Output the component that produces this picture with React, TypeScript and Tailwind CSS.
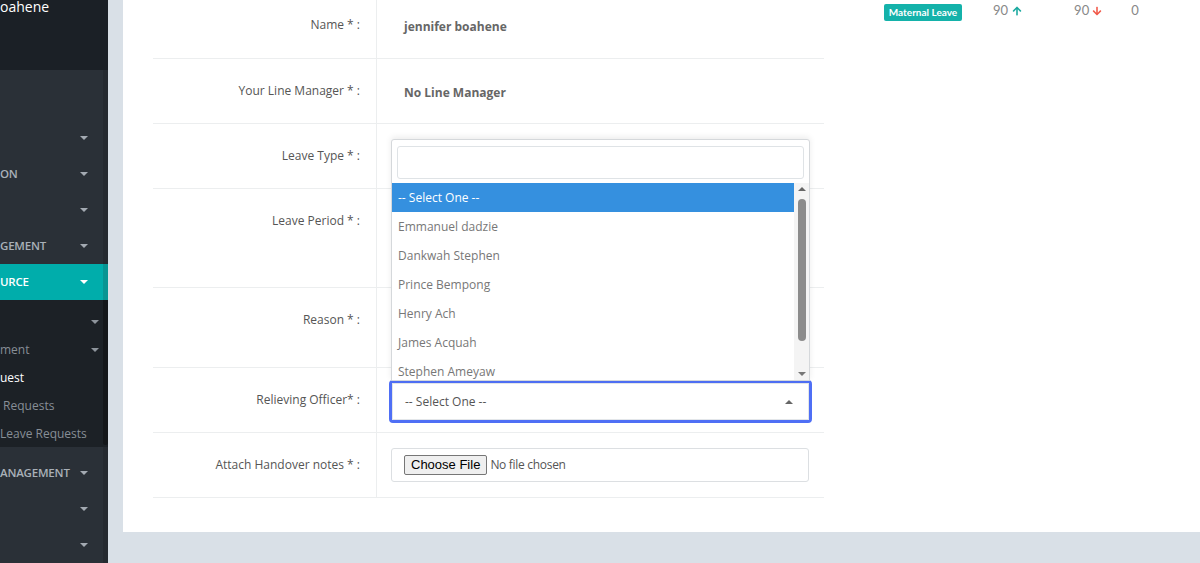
import { FaArrowUp, FaArrowDown } from 'react-icons/fa';

// small triangle used for the sidebar menu carets
const Caret = ({ color = 'border-t-[#a3aab2]', up = false }: { color?: string; up?: boolean }) => (
    <span
        className={`block w-0 h-0 border-l-[4px] border-r-[4px] border-l-transparent border-r-transparent ${up ? 'border-b-[4px] border-b-[#666]' : `border-t-[4px] ${color}`}`}
    />
);

const MenuRow = ({ text, caret, active }: { text?: string; caret?: boolean; active?: boolean }) => (
    <div className={`h-[36px] flex items-center justify-between pr-[15px] text-[11.5px] font-semibold tracking-[-0.2px] ${active ? 'text-white' : 'text-[#a9b0b8]'}`}>
        <span>{text}</span>
        {caret && <Caret color={active ? 'border-t-white' : 'border-t-[#a3aab2]'} />}
    </div>
);

const SubRow = ({ text, caret, active }: { text?: string; caret?: boolean; active?: boolean }) => (
    <div className={`h-[28px] flex items-center justify-between pr-[4px] text-[12px] whitespace-pre ${active ? 'text-white' : 'text-[#878e96]'}`}>
        <span>{text}</span>
        {caret && <Caret color="border-t-[#8d949b]" />}
    </div>
);

const Sidebar = () => (
    <aside className="w-[108px] shrink-0 h-[563px] flex flex-col bg-[#2a3037] overflow-hidden">
        <div className="h-[70px] bg-[#1b2026] shrink-0">
            <div className="-mt-[3px] text-[14px] leading-[20px] text-white">oahene</div>
        </div>
        <div className="border-r-[5px] border-[#252a30] pt-[50px]">
            <MenuRow caret />
            <MenuRow text="ON" caret />
            <MenuRow caret />
            <MenuRow text="GEMENT" caret />
        </div>
        <div className="bg-[#00adab] border-r-[5px] border-[#089593]">
            <MenuRow text="URCE" caret active />
        </div>
        <div className="flex bg-[#1c2126]">
            <div className="flex-1 pt-[8px] h-[147px]">
                <SubRow caret />
                <SubRow text="ment" caret />
                <SubRow text="uest" active />
                <SubRow text=" Requests" />
                <SubRow text="Leave Requests" />
            </div>
            <div className="w-[5px] h-[145px] bg-[#14171a] rounded-b-[3px]" />
        </div>
        <div className="border-r-[5px] border-[#252a30] pt-[8px] flex-1">
            <MenuRow text="ANAGEMENT" caret />
            <MenuRow caret />
            <MenuRow caret />
        </div>
    </aside>
);

const Label = ({ children }: { children: React.ReactNode }) => (
    <div className="w-[224px] shrink-0 border-r border-[#eceeef] text-right pr-[16px] pt-[22px] text-[12px] leading-[20px] text-[#555]">
        {children}
    </div>
);

const options = [
    '-- Select One --',
    'Emmanuel dadzie',
    'Dankwah Stephen',
    'Prince Bempong',
    'Henry Ach',
    'James Acquah',
    'Stephen Ameyaw',
];

// the opened select2 dropdown that floats over the form rows
const Dropdown = () => (
    <div className="absolute left-[238px] top-[139px] w-[419px] h-[242px] bg-white border border-[#d5d8db] rounded-t-[3px] shadow-[0_-2px_6px_rgba(0,0,0,0.08)] flex flex-col">
        <div className="px-[5px] pt-[6px] pb-[4px]">
            <div className="h-[33px] border border-[#dfe3e6] rounded-[3px]" />
        </div>
        <div className="flex flex-1 overflow-hidden">
            <div className="flex-1 overflow-hidden">
                {options.map((o, i) => (
                    <div
                        key={o}
                        className={`h-[29px] flex items-center pl-[6px] text-[12px] ${i === 0 ? 'bg-[#3590df] text-white' : 'text-[#777]'}`}
                    >
                        {o}
                    </div>
                ))}
            </div>
            <div className="w-[15px] bg-[#f4f4f4] flex flex-col items-center">
                <div className="pt-[4px] pb-[8px]"><Caret up /></div>
                <div className="w-[8px] h-[142px] bg-[#8c8c8c] rounded-[4px]" />
                <div className="mt-auto pb-[4px]"><Caret color="border-t-[#777]" /></div>
            </div>
        </div>
    </div>
);

export default function App() {
    return (
        <div className="w-[1200px] h-[563px] flex bg-[#d9e0e7] overflow-hidden" style={{ fontFamily: '"Open Sans", "Liberation Sans", sans-serif' }}>
            <Sidebar />
            <main className="flex-1 pl-[15px]">
                <div className="bg-white h-[532px] pl-[30px] flex">
                    <div className="relative w-[671px] shrink-0">
                        <div className="flex h-[59px] border-b border-[#eceeef]">
                            <div className="w-[224px] shrink-0 border-r border-[#eceeef] text-right pr-[16px] pt-[15px] text-[12px] leading-[20px] text-[#555]">Name * :</div>
                            <div className="pl-[27px] pt-[17px] text-[12px] leading-[20px] font-bold text-[#666]">jennifer boahene</div>
                        </div>
                        <div className="flex h-[65px] border-b border-[#eceeef]">
                            <Label>Your Line Manager * :</Label>
                            <div className="pl-[27px] pt-[24px] text-[12px] leading-[20px] font-bold text-[#666]">No Line Manager</div>
                        </div>
                        <div className="flex h-[65px] border-b border-[#eceeef]">
                            <Label>Leave Type * :</Label>
                        </div>
                        <div className="flex h-[99px] border-b border-[#eceeef]">
                            <Label>Leave Period * :</Label>
                        </div>
                        <div className="flex h-[80px] border-b border-[#eceeef]">
                            <Label>Reason * :</Label>
                        </div>
                        <div className="flex h-[65px] border-b border-[#eceeef]">
                            <Label>Relieving Officer* :</Label>
                            <div className="flex-1 pl-[12px] pr-[12px] pt-[12px]">
                                <div className="h-[43px] border-[3px] border-[#4f6ff5] rounded-[4px]">
                                    <div className="h-full border border-[#e3e6e9] flex items-center justify-between pl-[12px] pr-[15px] text-[12px] text-[#555]">
                                        <span>-- Select One --</span>
                                        <Caret up />
                                    </div>
                                </div>
                            </div>
                        </div>
                        <div className="flex h-[65px] border-b border-[#eceeef]">
                            <Label>Attach Handover notes * :</Label>
                            <div className="flex-1 pl-[14px] pr-[15px] pt-[15px]">
                                <div className="h-[34px] border border-[#dcdfe2] rounded-[3px] flex items-center pl-[12px] gap-[3px]">
                                    <span className="h-[20px] px-[6px] flex items-center bg-[#efefef] border border-[#767676] rounded-[2px] text-[13px] text-black" style={{ fontFamily: '"Liberation Sans", Arial, sans-serif' }}>Choose File</span>
                                    <span className="text-[12px] text-[#555] tracking-[-0.3px]">No file chosen</span>
                                </div>
                            </div>
                        </div>
                        <Dropdown />
                    </div>
                    <div className="ml-[60px] pt-[4px] flex items-start" style={{ fontFamily: 'Lato, sans-serif' }}>
                        <span className="h-[17px] w-[78px] flex items-center justify-center bg-[#14b2aa] rounded-[2px] text-white text-[10px] font-bold">Maternal Leave</span>
                        <span className="ml-[31px] -mt-[2px] flex items-center text-[13px] text-[#888] leading-[17px]">90<FaArrowUp size={10} className="ml-[4px] text-[#19a99f]" /></span>
                        <span className="ml-[52px] -mt-[2px] flex items-center text-[13px] text-[#888] leading-[17px]">90<FaArrowDown size={10} className="ml-[3px] text-[#f15a4a]" /></span>
                        <span className="ml-[29px] -mt-[2px] text-[13px] text-[#888] leading-[17px]">0</span>
                    </div>
                </div>
            </main>
        </div>
    );
}
